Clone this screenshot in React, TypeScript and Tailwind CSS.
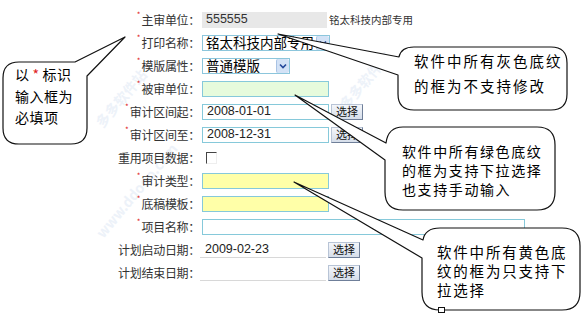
import type { ReactNode } from 'react'

const cjk = "font-['Noto_Sans_CJK_SC',sans-serif]"

function Label({ text, required = false }: { text: string; required?: boolean }) {
  return (
    <div className="flex w-[200px] shrink-0 justify-end text-[12px] leading-none text-[#333]">
      {required && <span className="mr-[1px] -translate-y-[3px] text-[8px] text-[#e02020]">*</span>}
      <span className="tracking-[-0.3px]">{text}</span>
    </div>
  )
}

function Row({ children }: { children: ReactNode }) {
  return <div className="flex h-[23px] items-center">{children}</div>
}

function PickButton() {
  return (
    <button
      type="button"
      className="ml-[2px] flex h-[16px] w-[32px] items-center justify-center border border-t-[#b8c4d6] border-l-[#b8c4d6] border-r-[#6f7f99] border-b-[#6f7f99] bg-gradient-to-b from-[#f4f6fa] to-[#d6deea] text-[11px] leading-none text-[#111]"
    >
      选择
    </button>
  )
}

function SelectBox({ value, width }: { value: string; width: string }) {
  return (
    <div className={`relative flex h-[16px] items-center overflow-hidden border border-[#8cc6dc] bg-white ${width}`}>
      <span className="whitespace-nowrap pl-[3px] text-[13.5px] leading-none text-black">{value}</span>
      <div className="absolute right-0 top-0 flex h-full w-[13px] items-center justify-center rounded-[2px] border-l border-[#a9c3e4] bg-[#d3e2f6]">
        <svg width="8" height="6" viewBox="0 0 8 6">
          <polyline points="1,1.5 4,4.5 7,1.5" fill="none" stroke="#24489a" strokeWidth="1.6" />
        </svg>
      </div>
    </div>
  )
}

function Bubble({ d }: { d: string }) {
  return <path d={d} fill="white" stroke="#111" strokeWidth="1.2" strokeLinejoin="round" />
}

export default function App() {
  return (
    <div className={`relative h-[313px] w-[584px] overflow-hidden bg-white ${cjk}`}>
      {/* watermark */}
      <div className="pointer-events-none absolute left-[78px] top-[180px] -rotate-[50deg] whitespace-nowrap text-[14px] font-bold text-[#edf2f9]">
        www.ddooo.com
      </div>
      <div className="pointer-events-none absolute left-[86px] top-[88px] -rotate-[50deg] whitespace-nowrap text-[14px] font-bold text-[#edf2f9]">
        多多软件站
      </div>
      <div className="pointer-events-none absolute left-[330px] top-[70px] -rotate-[50deg] whitespace-nowrap text-[14px] font-bold text-[#edf2f9]">
        多多软件站
      </div>

      <div className="relative flex flex-col pt-[8px]">
        <Row>
          <Label text="主审单位：" required />
          <div className="ml-[2px] flex h-[16px] w-[125px] items-center bg-[#e8e8e8] pl-[4px] font-['Liberation_Sans',sans-serif] text-[12.5px] text-[#333]">
            555555
          </div>
          <span className="ml-[2px] whitespace-nowrap text-[10.5px] text-[#333]">铭太科技内部专用</span>
        </Row>
        <Row>
          <Label text="打印名称：" required />
          <div className="ml-[2px]">
            <SelectBox value="铭太科技内部专用" width="w-[128px]" />
          </div>
        </Row>
        <Row>
          <Label text="模版属性：" required />
          <div className="ml-[2px]">
            <SelectBox value="普通模版" width="w-[88px]" />
          </div>
        </Row>
        <Row>
          <Label text="被审单位：" required />
          <div className="ml-[2px] h-[16px] w-[127px] border border-[#86c9da] bg-[#e6fbdc]" />
        </Row>
        <Row>
          <Label text="审计区间起：" required />
          <div className="ml-[2px] flex h-[16px] w-[127px] items-center border border-[#86c9da] bg-white pl-[4px] font-['Liberation_Sans',sans-serif] text-[12.5px] text-[#222]">
            2008-01-01
          </div>
          <PickButton />
        </Row>
        <Row>
          <Label text="审计区间至：" required />
          <div className="ml-[2px] flex h-[16px] w-[127px] items-center border border-[#86c9da] bg-white pl-[4px] font-['Liberation_Sans',sans-serif] text-[12.5px] text-[#222]">
            2008-12-31
          </div>
          <PickButton />
        </Row>
        <Row>
          <Label text="重用项目数据：" />
          <div className="ml-[6px] h-[12px] w-[11px] border-l border-t border-b border-r border-l-[#444] border-t-[#444] border-b-[#eee] border-r-[#eee] bg-white" />
        </Row>
        <Row>
          <Label text="审计类型：" required />
          <div className="ml-[2px] h-[16px] w-[127px] border border-[#86c9da] bg-[#ffffa8]" />
        </Row>
        <Row>
          <Label text="底稿模板：" required />
          <div className="ml-[2px] h-[16px] w-[127px] border border-[#86c9da] bg-[#ffffa8]" />
        </Row>
        <Row>
          <Label text="项目名称：" required />
          <div className="ml-[2px] h-[16px] w-[323px] border border-[#86c9da] bg-white" />
        </Row>
        <Row>
          <Label text="计划启动日期：" />
          <div className="flex h-[16px] w-[126px] items-center border-b border-[#d8d8d8] pl-[5px] font-['Liberation_Sans',sans-serif] text-[12.5px] text-[#222]">
            2009-02-23
          </div>
          <PickButton />
        </Row>
        <Row>
          <Label text="计划结束日期：" />
          <div className="h-[16px] w-[126px] border-b border-[#d8d8d8]" />
          <PickButton />
        </Row>
      </div>

      {/* callouts */}
      <svg className="pointer-events-none absolute left-0 top-0" width="584" height="313" viewBox="0 0 584 313">
        <Bubble d="M 19 62 H 75 L 125 37 L 87 76 V 128 Q 87 144 71 144 H 19 Q 3 144 3 128 V 78 Q 3 62 19 62 Z" />
        <Bubble d="M 414 47 H 551 Q 567 47 567 63 V 94 Q 567 110 551 110 H 414 Q 398 110 398 94 V 75 L 278 34 L 399 57 Q 401 47 414 47 Z" />
        <Bubble d="M 403 127 H 537 Q 555 127 555 145 V 192 Q 555 210 537 210 H 403 Q 385 210 385 192 V 160 L 295 95 L 386 143 Q 388 127 403 127 Z" />
        <Bubble d="M 440 228 H 562 Q 580 228 580 246 V 292 Q 580 310 562 310 H 440 Q 422 310 422 292 V 258 L 294 182 L 423 240 Q 425 228 440 228 Z" />
        <rect x="438.5" y="307.5" width="6" height="5" fill="white" stroke="#111" strokeWidth="1" />
      </svg>

      <div className="absolute left-[15px] top-[64px] text-[14px] leading-[21.5px] tracking-[0.5px] text-black">
        <div className="whitespace-nowrap">
          以<span className="mx-[3px] text-[#e02020]">*</span>标识
        </div>
        <div className="whitespace-nowrap">输入框为</div>
        <div className="whitespace-nowrap">必填项</div>
      </div>
      <div className="absolute left-[414px] top-[48px] text-[14.5px] leading-[25px] tracking-[2px] text-black">
        <div className="whitespace-nowrap">软件中所有灰色底纹</div>
        <div className="whitespace-nowrap">的框为不支持修改</div>
      </div>
      <div className="absolute left-[402px] top-[142px] text-[14px] leading-[19px] tracking-[1.6px] text-black">
        <div className="whitespace-nowrap">软件中所有绿色底纹</div>
        <div className="whitespace-nowrap">的框为支持下拉选择</div>
        <div className="whitespace-nowrap">也支持手动输入</div>
      </div>
      <div className="absolute left-[437px] top-[242px] text-[14.5px] leading-[19px] tracking-[1.8px] text-black">
        <div className="whitespace-nowrap">软件中所有黄色底</div>
        <div className="whitespace-nowrap">纹的框为只支持下</div>
        <div className="whitespace-nowrap">拉选择</div>
      </div>
    </div>
  )
}
